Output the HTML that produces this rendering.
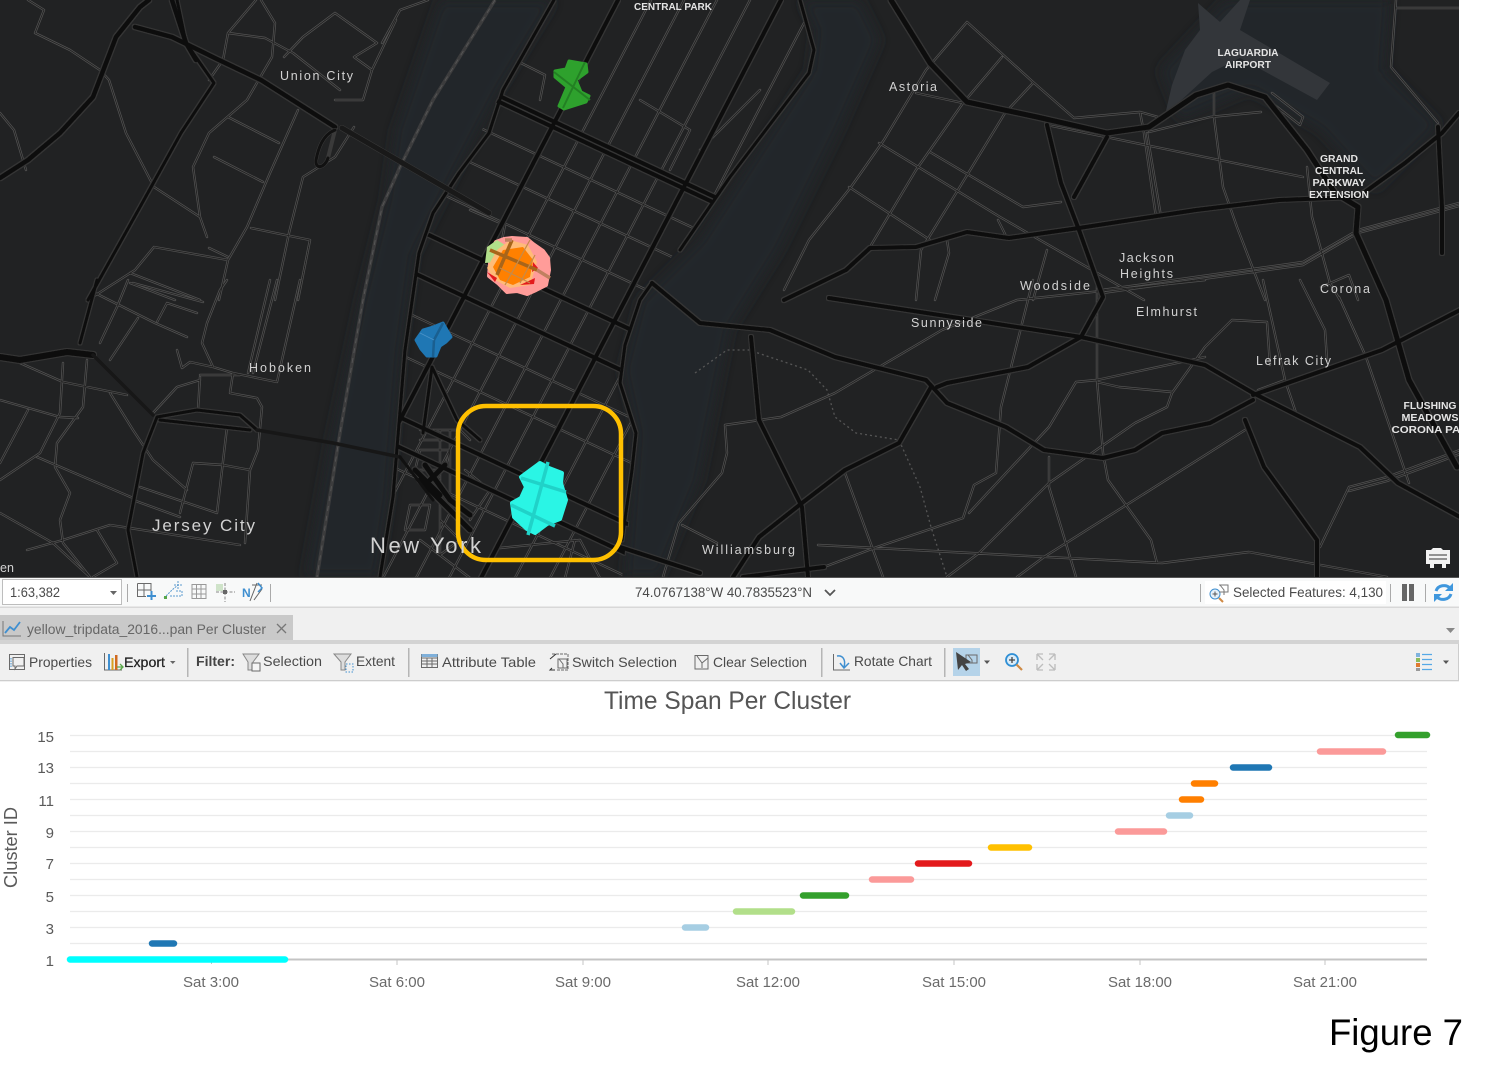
<!DOCTYPE html>
<html><head><meta charset="utf-8"><title>Figure 7</title>
<style>
html,body{margin:0;padding:0;background:#fff;width:1503px;height:1082px;overflow:hidden}
svg{display:block}
text{font-family:"Liberation Sans",sans-serif}
.m{fill:#d2d2d2}
.c{fill:#e4e4e4;font-weight:bold;text-anchor:middle;font-size:10.5px}
.t{fill:#4a4a4a;font-size:14px}
.y{fill:#5a5a5a;font-size:15px;text-anchor:end}
.x{fill:#6a6a6a;font-size:15px;text-anchor:middle}
.ic{fill:none;stroke:#6a6a6a;stroke-width:1}
</style></head><body>
<svg width="1503" height="1082" viewBox="0 0 1503 1082" xmlns="http://www.w3.org/2000/svg">
<defs>
<filter id="soft" x="-2%" y="-2%" width="104%" height="104%"><feGaussianBlur stdDeviation=".35"/></filter>
<filter id="dil" x="-2%" y="-2%" width="104%" height="104%"><feMorphology operator="dilate" radius=".8"/><feGaussianBlur stdDeviation=".3"/></filter>
<filter id="wat" x="-5%" y="-5%" width="110%" height="110%"><feGaussianBlur stdDeviation="6"/></filter>
<clipPath id="mapc"><rect x="0" y="0" width="1459" height="577"/></clipPath>
<clipPath id="man"><path d="M554 0L503 90L459 173L419 253L405 350L393 497L380 578H622L634 470L636 433L620 370L640 300L730 177L809 73L814 50L800 0Z"/></clipPath>
<g id="min" fill="none" stroke-linejoin="round" stroke-linecap="round">
<g clip-path="url(#man)">
<path d="M651 0L350 578M684 0L383 578M717 0L416 578M750 0L449 578M816 0L515 578M851 0L550 578"/>
<path d="M380 81L830 292M380 120L830 331M380 165L830 376M380 300L830 511M380 345L830 556M380 461L830 672"/>
<path d="M515 60L545 75L540 100M640 100L690 130L670 170M700 150L760 90M470 210L505 225L500 250M420 430H460L470 440M420 440H455M440 430V520M450 430V510M465 470L490 490L470 520M420 540L470 578M500 548L580 540L600 578M575 540L565 578M410 505H430L425 530H405ZM440 520L460 540L440 555ZM420 450H450L445 470H415Z"/>
</g>
<path d="M28 0L44 10L35 33L70 50L100 70L109 80L126 133L154 187L200 217L207 237M0 113L14 130L26 170M256 0L228 33L223 60L209 80M228 33L265 38L293 53L340 90M261 0L275 23L272 57L247 100L209 133L193 167L200 217M335 13L377 43L354 57L372 70M303 37L284 57M335 13L303 37M428 0L400 10L382 43M396 20L372 70L363 100L335 100M228 117L279 143M214 157L263 182M298 110L270 173L247 227L228 260L219 300M354 127L335 157L303 177L289 233L275 300M251 228L310 240L298 300M228 260L154 247L135 270L88 300M130 273L200 300M130 283L175 300M209 248L228 257"/>
<path d="M128 280L117 307L100 343M95 293L155 323M133 283L203 302M155 323L187 337M157 322L167 303L197 313M138 318L110 360M227 280L220 290L207 323L202 343L213 367M177 350L182 368L190 362L213 367L233 373L277 382L300 280M277 280L253 373M270 280L248 373M233 373L230 393L257 398L262 407L258 450L250 470L245 543M227 427L217 513M193 463L223 465L250 470M193 463L180 513M140 487L217 513M133 500L180 517M0 400L60 417L78 418M20 363L63 382L127 395M63 363L60 413L40 453L0 480M87 360L83 407L57 443L55 467L70 493L60 520L63 543L90 577M28 410L0 463M37 457L133 498M0 513L53 543L90 577M110 393L133 430L153 460L187 490M200 380L177 387L153 413M200 377L198 410M63 540L110 525L240 545M27 550L63 540M97 530L117 563L93 577M200 375H240"/>
<path d="M967 22L926 70L884 140L851 187L809 240L784 290M967 22L1033 82L1074 118M1002 57L963 103L916 170L870 247M1033 83L1005 113L958 190L921 250L916 300M879 143L1000 217L1144 300M930 152L1023 207L1061 202M849 187L930 240M998 220L1007 238M916 93L963 103M1047 125L1303 177M1074 118L1140 112L1158 117M1140 112L1144 133L1156 217M1147 133L1161 217M1149 132L1210 117L1261 112M1214 93L1214 117L1223 187L1237 227L1265 300M1272 93L1303 117L1300 125L1272 103M1396 0L1391 67L1438 123M1396 8H1459M1307 167L1312 217L1330 283L1340 300M1102 290L1303 262L1358 230L1459 203M1102 293L1303 265L1358 233L1459 206M1321 287L1349 275L1358 300M1047 250L1033 300M947 240L949 253L935 300"/>
<path d="M781 417L725 425L727 453L722 473L679 523L663 577M781 417L835 393L942 330L1017 300L1205 280M1033 280L1001 407L996 473L974 485L963 518M963 518L877 547L824 567M1205 357L1097 380L1076 382L1049 427L969 513M1097 280L1097 380L1103 453L1108 480L1151 540L1157 563M1232 320L1205 347L1172 393L1167 407L1135 423L1049 483L979 553L947 577M1097 382L1119 387L1172 392M1245 430L1044 557L1017 577M818 545L1162 563L1249 552L1387 577M845 473L872 547L883 577M1049 457L1049 487L1076 577M1258 390L1285 380L1296 413M1263 280L1285 380M1339 297L1366 357L1409 483M1349 487L1387 477L1460 450M1349 491L1387 481L1460 454M1320 547L1349 487M682 525L717 543M1232 320L1267 322L1270 365M1300 280L1325 330L1327 360"/>
</g>
<g id="maj" fill="none" stroke-linejoin="round" stroke-linecap="round">
<path stroke-width="4.500" d="M0 178L28 160L60 133L93 97L116 37L140 7L149 0M135 27L172 37L219 60L261 80L335 127M172 0L186 43L196 60"/>
<path stroke-width="3" d="M177 0L186 43L214 83L181 133L140 207L88 300M97 280L80 343M137 577L128 530L143 453L157 417L197 410L240 415L257 430M160 420L250 430M554 0L503 90L489 133L459 173L433 213L419 253L405 350L393 497L380 577M800 0L814 50L809 73L730 177L680 250M652 283L640 300L625 345L620 383L636 433L632 470L622 540M432 367L423 433M432 367L457 420L480 440"/>
<path stroke-width="6" d="M0 357L20 360L67 352L93 355"/>
<path clip-path="url(#man)" stroke-width="4" d="M380 40L830 251M380 212L830 423M380 257L830 468M380 408L830 619M380 438L830 649M618 0L318 578M781 0L481 578M380 46L830 257"/>
<path stroke-width="5" d="M891 0L930 63L967 102L1037 117L1107 133L1149 127L1196 95L1228 85L1265 97L1307 150L1335 193L1358 207L1356 233L1386 300L1409 380L1457 467"/>
<path stroke-width="4" d="M1047 125L1061 183L1079 230L1098 283L1103 297L1081 337L1028 367L947 383L937 387M1107 137L1074 197M846 270L870 248L916 247L967 232L1009 238L1079 228L1196 210L1279 200L1358 197L1405 163L1442 133L1459 113M1438 127L1442 207L1442 253M829 298L985 322L1081 337L1205 365L1253 393M1253 395L1382 350L1460 310M1253 393L1360 447L1398 483L1460 517M652 283L700 323L770 330L835 357L926 380L947 403L1006 427L1044 450L1103 458L1135 450L1162 433L1210 423L1253 400M931 387L899 443L845 470L802 503L759 537L733 577M751 337L759 420L802 507L808 577M1245 420L1264 467L1317 540L1317 577M620 547L700 573M743 577L824 567M846 270L784 300"/>
<path clip-path="url(#man)" stroke-width="5" d="M415 470L440 495M425 465L450 500L470 515M430 480L445 465M420 480L470 530"/>
</g>
</defs>

<!-- MAP -->
<g clip-path="url(#mapc)">
<rect width="1459" height="577" fill="#212223"/>
<g filter="url(#wat)" fill="#24272a">
<path d="M440 0H555L500 90L455 175L415 255L402 350L390 497L378 577H305L330 440L360 300L385 200L395 130Z"/>
<path d="M640 300L700 240L810 70L815 30L800 0H860L880 40L840 130L780 250L730 330L700 480L660 577H625L636 433L622 370Z"/>
<path d="M1225 0H1390L1385 70L1440 125L1375 190L1320 130L1250 90L1180 120L1160 70Z"/>
</g>
<path fill="#33363a" d="M1198 3L1220 22L1240 0H1250L1240 30L1330 83L1317 100L1240 58L1212 72L1165 115L1172 85L1185 50L1200 30Z"/>
<path fill="none" stroke="#3c3c3d" stroke-width="3.500" d="M495 0L433 100L400 167L382 207L363 300L340 433L317 577"/>
<path fill="none" stroke="#555" stroke-width="1" stroke-dasharray="5 5" d="M495 0L433 100L400 167L382 207L363 300L340 433L317 577"/>
<path fill="none" stroke="#565656" stroke-width="1.300" stroke-dasharray="2 3" d="M695 373L727 350L749 350L808 370L827 390L835 417L856 433L899 440L920 487L931 527L947 577"/>

<g filter="url(#soft)">
<use href="#min" stroke="#525252" stroke-width="2.400"/>
<use href="#min" stroke="#202020" stroke-width=".9"/>
</g>
<use href="#maj" stroke="#343434" filter="url(#dil)"/>
<use href="#maj" stroke="#0f0f0f" filter="url(#soft)"/>

<!-- tunnels -->
<g fill="none" stroke-linecap="round" stroke-linejoin="round">
<path stroke="#3a3a3a" stroke-width="6" d="M342 128L489 213"/><path stroke="#191919" stroke-width="5" d="M342 128L489 213"/>
<path stroke="#3a3a3a" stroke-width="4" d="M335 130C322 135 318 150 316 160C315 170 325 168 328 158L335 130"/>
<path stroke="#111" stroke-width="3" d="M335 130C322 135 318 150 316 160C315 170 325 168 328 158"/>
<path stroke="#171717" stroke-width="3.500" d="M93 355L153 415M257 430L333 443L400 457"/>
<path stroke="#111" stroke-width="3" d="M400 457L433 500"/>
</g>

<!-- clusters -->
<path fill="#2ea12d" stroke="#2ea12d" stroke-width="3" stroke-linejoin="round" d="M555 71L566 69L569 61L586 64L587 72L576 80L581 92L589 96L586 102L564 109L559 106L567 87L555 77Z"/>
<path fill="none" stroke="#238023" stroke-width="2" d="M554 72L590 100M585 62L563 108"/>
<path fill="#ff9c99" stroke="#ff9c99" stroke-width="4" stroke-linejoin="round" d="M491 251L496 242L504 239L512 238L527 239L533 244L543 251L548 258L549 270L546 285L536 290L527 294L517 291L507 292L498 283L489 276Z"/>
<path fill="#b2df8a" d="M485 263L487 247L497 240L505 245L498 262Z"/>
<path fill="#ffbb78" d="M487 268L497 250L510 240L528 245L537 262L530 285L510 288L495 280Z"/>
<path fill="#e31a1c" d="M487 272L497 278L495 282ZM520 285L535 278L534 284ZM533 262L538 268L532 272Z"/>
<path fill="#ff8000" d="M493 267L503 250L523 247L533 260L530 277L513 285L500 280Z"/>
<g fill="none" stroke-width="3.500"><path stroke="#a8651a" d="M490 250L537 270M512 240L497 275"/><path stroke="#c08060" d="M537 270L550 278M512 240L505 240" /></g>
<path fill="none" stroke="#c58a4a" stroke-width="1.200" d="M505 285L530 240M520 283L535 255M500 268L530 283"/>
<path fill="#1f77b4" stroke="#1f77b4" stroke-width="3" stroke-linejoin="round" d="M416 340L423 330L433 327L443 323L451 337L446 342L440 346L436 356L427 356L421 349Z"/>
<path fill="none" stroke="#1a5f90" stroke-width="2.500" d="M443 323L434 340L433 357"/>
<path fill="none" stroke="#4a93c8" stroke-width=".8" d="M420 333L434 340"/>
<path fill="#2af5e5" stroke="#2af5e5" stroke-width="4" stroke-linejoin="round" d="M521 477L540 463L549 468L562 473L561 483L566 500L560 519L547 524L535 533L527 529L514 517L512 503L521 498L526 487Z"/>
<path fill="none" stroke="#20d2c8" stroke-width="3.500" d="M521 478L566 492M511 505L555 526M548 462L528 535"/>

<!-- yellow box -->
<rect x="458" y="406" width="163" height="154" rx="28" fill="none" stroke="#ffc000" stroke-width="4.500"/>

<!-- labels -->
<text class="c" x="673" y="10" textLength="78" lengthAdjust="spacingAndGlyphs">CENTRAL PARK</text>
<text class="c" x="1248" y="56" textLength="61" lengthAdjust="spacingAndGlyphs">LAGUARDIA</text>
<text class="c" x="1248" y="68" textLength="46" lengthAdjust="spacingAndGlyphs">AIRPORT</text>
<text class="c" x="1339" y="162" textLength="38" lengthAdjust="spacingAndGlyphs">GRAND</text>
<text class="c" x="1339" y="174" textLength="48" lengthAdjust="spacingAndGlyphs">CENTRAL</text>
<text class="c" x="1339" y="186" textLength="53" lengthAdjust="spacingAndGlyphs">PARKWAY</text>
<text class="c" x="1339" y="198" textLength="60" lengthAdjust="spacingAndGlyphs">EXTENSION</text>
<text class="c" x="1430" y="409" textLength="53" lengthAdjust="spacingAndGlyphs">FLUSHING</text>
<text class="c" x="1430" y="421" textLength="57" lengthAdjust="spacingAndGlyphs">MEADOWS</text>
<text class="c" x="1430" y="433" textLength="77" lengthAdjust="spacingAndGlyphs">CORONA PAR</text>
<text class="m" font-size="12.500" x="280" y="80" textLength="73" lengthAdjust="spacing">Union City</text>
<text class="m" font-size="12.500" x="889" y="91" textLength="48" lengthAdjust="spacing">Astoria</text>
<text class="m" font-size="12.500" x="1119" y="262" textLength="55" lengthAdjust="spacing">Jackson</text>
<text class="m" font-size="12.500" x="1120" y="278" textLength="53" lengthAdjust="spacing">Heights</text>
<text class="m" font-size="12.500" x="1020" y="290" textLength="70" lengthAdjust="spacing">Woodside</text>
<text class="m" font-size="12.500" x="1320" y="293" textLength="50" lengthAdjust="spacing">Corona</text>
<text class="m" font-size="12.500" x="1136" y="316" textLength="61" lengthAdjust="spacing">Elmhurst</text>
<text class="m" font-size="12.500" x="911" y="327" textLength="71" lengthAdjust="spacing">Sunnyside</text>
<text class="m" font-size="12.500" x="1256" y="365" textLength="75" lengthAdjust="spacing">Lefrak City</text>
<text class="m" font-size="12.500" x="249" y="372" textLength="62" lengthAdjust="spacing">Hoboken</text>
<text class="m" font-size="12.500" x="702" y="554" textLength="93" lengthAdjust="spacing">Williamsburg</text>
<text class="m" font-size="12.500" x="0" y="572" textLength="14" lengthAdjust="spacing">en</text>
<text class="m" font-size="17" x="152" y="531" textLength="103" lengthAdjust="spacing">Jersey City</text>
<text class="m" font-size="22" x="370" y="553" textLength="111" lengthAdjust="spacing">New York</text>

<!-- map corner icon -->
<path fill="#f2f2f2" d="M1426 550H1431L1433 548H1441L1443 550H1450V564H1446V568H1442V564H1434V568H1430V564H1426Z"/>
<path stroke="#333" stroke-width="1" d="M1429 555H1447M1429 559H1447"/>
</g>

<!-- STATUS BAR -->
<rect y="577" width="1459" height="1" fill="#555"/>
<rect y="578" width="1459" height="29" fill="#f8f9f9"/>
<rect y="606.500" width="1459" height="1.500" fill="#d8d8d8"/>
<rect x="2.500" y="579.500" width="119" height="25" fill="#fff" stroke="#bdbdbd"/>
<text class="t" x="10" y="597" textLength="50" lengthAdjust="spacingAndGlyphs">1:63,382</text>
<path d="M110 591H117L113.500 595Z" fill="#666"/>
<g fill="#aaa"><rect x="127" y="584" width="1" height="18"/><rect x="270" y="584" width="1" height="18"/><rect x="1200" y="584" width="1" height="18"/><rect x="1390" y="584" width="1" height="18"/><rect x="1425" y="584" width="1" height="18"/></g>
<g class="ic">
<path d="M137.500 583.500H151V592M137.500 583.500V596.500H146M137.500 590H151M144 583.500V596.500"/>
<path d="M147 596H156M151.500 591V600" stroke="#3f8fd0" stroke-width="2"/>
<path d="M164 598L172 590L178 585M170 596H182V591H176M174 585H182M178 581V589" stroke="#5b9bd0" stroke-dasharray="2 1"/>
<rect x="164" y="596" width="3" height="3" fill="#57a64a" stroke="none"/>
<path d="M192 584.500H206V598.500H192ZM192 589H206M192 594H206M196.500 585V598M201 585V598" stroke="#999"/>
<rect x="216" y="584" width="7" height="7" fill="#cfe3c9" stroke="none"/>
<path d="M216 592H235M225 583V602" stroke="#888" stroke-dasharray="3 1.500"/>
<rect x="223" y="590" width="4" height="4" fill="#666" stroke="none"/>
<path d="M257 583L250 601M252 585H262M254 600L262 589" stroke="#666"/>
<path d="M258 583L262 588L258 592" stroke="#3f8fd0" stroke-width="1.500"/>
</g>
<text x="242" y="597" font-size="12" font-weight="bold" fill="#3f8fd0">N</text>
<text class="t" x="635" y="597" textLength="177" lengthAdjust="spacingAndGlyphs">74.0767138°W 40.7835523°N</text>
<path d="M825 590L830 595L835 590" fill="none" stroke="#555" stroke-width="1.800"/>
<rect x="1205" y="581" width="181" height="23" fill="#fff"/>
<circle cx="1215" cy="594" r="5" fill="#e6f1fa" stroke="#3f8fd0"/>
<path d="M1212.500 594H1217.500M1215 591.500V596.500" stroke="#555"/>
<path d="M1219 598L1223 602" stroke="#d08a45" stroke-width="2"/>
<path d="M1219 585H1228V592H1219M1220 585L1224 590V595" fill="none" stroke="#777"/>
<text class="t" x="1233" y="597" textLength="150" lengthAdjust="spacingAndGlyphs">Selected Features: 4,130</text>
<rect x="1402" y="584" width="5" height="17" fill="#666"/><rect x="1409" y="584" width="5" height="17" fill="#666"/>
<path d="M1436 591C1438 585 1446 584 1450 588M1451 594C1449 600 1441 601 1437 597" fill="none" stroke="#3f97dd" stroke-width="3"/>
<path d="M1453 583V591H1445ZM1434 602V594H1442Z" fill="#3f97dd"/>

<!-- TAB ROW -->
<rect y="608" width="1459" height="32" fill="#f0f0f0"/>
<rect y="615" width="293" height="25" fill="#c9c9c9"/>
<path d="M3 621V636H21" fill="none" stroke="#777"/>
<path d="M5 633L10 627L14 630L20 622" fill="none" stroke="#3f8fd0" stroke-width="1.800"/>
<text x="27" y="634" font-size="14" fill="#666" textLength="239" lengthAdjust="spacingAndGlyphs">yellow_tripdata_2016...pan Per Cluster</text>
<path d="M277 624L286 633M286 624L277 633" stroke="#777" stroke-width="1.300"/>
<path d="M1446 628H1455L1450.500 633Z" fill="#888"/>
<rect y="640" width="1459" height="4" fill="#d3d3d3"/>

<!-- TOOLBAR -->
<rect y="644" width="1459" height="37" fill="#f0f0f0"/>
<rect y="680" width="1459" height="1.300" fill="#cdcdcd"/>
<rect x="1458" y="644" width="1" height="37" fill="#cdcdcd"/>
<g fill="#b5b5b5"><rect x="187" y="648" width="1.500" height="29"/><rect x="408" y="648" width="1.500" height="29"/><rect x="821" y="648" width="1.500" height="29"/><rect x="944" y="648" width="1.500" height="29"/></g>
<rect x="953" y="648" width="27" height="28" fill="#b5d3e9"/>
<g class="ic">
<rect x="9.500" y="654.500" width="15" height="15" /><path d="M13 657.500H24V666H17L15 669V666H13Z" fill="#f0f0f0"/><path d="M11 658V668" stroke="#3f8fd0" stroke-dasharray="1.500 1"/>
<path d="M104.500 653V670H122"/>
<path d="M243 654H259L253 662V670H248V662Z" stroke="#888" fill="#ddd"/>
<rect x="252" y="663" width="8" height="8" fill="#f5f5f5"/>
<path d="M334 654H351L345 662V670H341V662Z" stroke="#888" fill="#ddd"/>
<path d="M346 664H353V672H346Z" stroke="#3f8fd0" stroke-dasharray="1.500 1.500"/>
<rect x="421.500" y="654.500" width="16" height="13"/><path d="M421.500 658H437.500M421.500 661H437.500M421.500 664H437.500M427 658V667M432 658V667"/>
<rect x="421.500" y="654" width="16" height="3" fill="#7fb0da" stroke="none"/>
<path d="M552 654H568V670H556" stroke-dasharray="3 1"/><path d="M558 659H567V668H558ZM559 659L563 664V668"/>
<path d="M550 659L556 654M552 668L550 670L555 670" stroke="#333"/>
<path d="M695 655.500H708V669H695ZM697 656L702 663V668M708 658L702 663"/>
<path d="M833.500 654V670H850"/>
<path d="M837 656C843 655 846 660 844 667" stroke="#3f8fd0" stroke-width="1.500"/><path d="M840 663L844 668L849 663" stroke="#3f8fd0" stroke-width="1.500"/>
<path d="M966 655H977V663H966ZM968 655L972 660V663"/>
<path d="M1037 654H1043M1037 654V660M1055 654H1049M1055 654V660M1037 670H1043M1037 670V664M1055 670H1049M1055 670V664M1037 654L1043 660M1055 654L1049 660M1037 670L1043 664M1055 670L1049 664" stroke="#bdbdbd" stroke-width="1.300"/>
</g>
<g fill="#e0a030"><rect x="108" y="654" width="2" height="16" fill="#3f8fd0"/><rect x="111.500" y="658" width="2" height="12" fill="#d9a020"/><rect x="115" y="655" width="2.500" height="15" fill="#d06a20"/></g>
<path d="M117 667H122M120 664L123 667L120 670" stroke="#5aa84a" stroke-width="1.300" fill="none"/>
<path d="M170 661H175.500L172.800 664Z" fill="#666"/>
<path d="M956 652L958 670L962 665L966 671L969 669L965 664L971 662Z" fill="#444"/>
<path d="M984 660.500H990L987 664Z" fill="#555"/>
<circle cx="1012" cy="660" r="6" fill="#d9ecf9" stroke="#2f8fd5" stroke-width="1.800"/>
<path d="M1009 660H1015M1012 657V663" stroke="#444" stroke-width="1.300"/>
<path d="M1016.500 664.500L1022 670" stroke="#cf8a45" stroke-width="2.200"/>
<g fill="#7fb3de"><rect x="1416" y="653" width="4" height="4"/></g><rect x="1416" y="658" width="4" height="4" fill="#8dbb5b"/><rect x="1416" y="663" width="4" height="4" fill="#e07a30"/><rect x="1416" y="668" width="4" height="3" fill="#999"/>
<path d="M1422 654.500H1432M1422 659.500H1432M1422 664.500H1432M1422 669.500H1432" stroke="#55a8e6" stroke-width="1.200"/>
<path d="M1443 660.500H1449L1446 664Z" fill="#555"/>

<text class="t" x="29" y="667" textLength="63" lengthAdjust="spacingAndGlyphs">Properties</text>
<text x="124" y="667" font-size="14" fill="#222" textLength="41" lengthAdjust="spacingAndGlyphs" stroke="#222" stroke-width=".25">Export</text>
<text x="196" y="666" font-size="14" font-weight="bold" fill="#444" textLength="39" lengthAdjust="spacingAndGlyphs">Filter:</text>
<text class="t" x="263" y="666" textLength="59" lengthAdjust="spacingAndGlyphs">Selection</text>
<text class="t" x="356" y="666" textLength="39" lengthAdjust="spacingAndGlyphs">Extent</text>
<text class="t" x="442" y="667" textLength="94" lengthAdjust="spacingAndGlyphs">Attribute Table</text>
<text class="t" x="572" y="667" textLength="105" lengthAdjust="spacingAndGlyphs">Switch Selection</text>
<text class="t" x="713" y="667" textLength="94" lengthAdjust="spacingAndGlyphs">Clear Selection</text>
<text class="t" x="854" y="666" textLength="78" lengthAdjust="spacingAndGlyphs">Rotate Chart</text>

<!-- CHART -->
<text x="604" y="709" font-size="25" fill="#555" textLength="247" lengthAdjust="spacingAndGlyphs">Time Span Per Cluster</text>
<path stroke="#ebebeb" stroke-width="1.300" d="M70 735.500H1427M70 751.500H1427M70 767.500H1427M70 783.500H1427M70 799.500H1427M70 815.500H1427M70 831.500H1427M70 847.500H1427M70 863.500H1427M70 879.500H1427M70 895.500H1427M70 911.500H1427M70 927.500H1427M70 943.500H1427"/>
<rect x="70" y="958.500" width="1357" height="2" fill="#c4c4c4"/>
<path stroke="#c4c4c4" d="M397 960V965M583 960V965M768 960V965M954 960V965M1140 960V965M1325 960V965M211.500 960V964"/>
<g fill="none" stroke-width="6.500" stroke-linecap="round">
<path stroke="#00ffff" d="M70 959.500H285"/>
<path stroke="#1f77b4" d="M152 943.500H174"/>
<path stroke="#a6cee3" d="M685 927.500H706"/>
<path stroke="#b2df8a" d="M736 911.500H792"/>
<path stroke="#33a02c" d="M803 895.500H846"/>
<path stroke="#fb9a99" d="M872 879.500H911"/>
<path stroke="#e31a1c" d="M918 863.500H969"/>
<path stroke="#ffc000" d="M991 847.500H1029"/>
<path stroke="#fb9a99" d="M1118 831.500H1164"/>
<path stroke="#a6cee3" d="M1169 815.500H1190"/>
<path stroke="#ff7f00" d="M1182 799.500H1201"/>
<path stroke="#ff7f00" d="M1194 783.500H1215"/>
<path stroke="#1f77b4" d="M1233 767.500H1269"/>
<path stroke="#fb9a99" d="M1320 751.500H1383"/>
<path stroke="#33a02c" d="M1398 735H1427"/>
</g>
<text class="y" x="54" y="742">15</text><text class="y" x="54" y="773">13</text><text class="y" x="54" y="806">11</text><text class="y" x="54" y="838">9</text><text class="y" x="54" y="869">7</text><text class="y" x="54" y="902">5</text><text class="y" x="54" y="934">3</text><text class="y" x="54" y="966">1</text>
<text x="17" y="888" transform="rotate(-90 17 888)" font-size="18" fill="#5a5a5a" textLength="81" lengthAdjust="spacingAndGlyphs">Cluster ID</text>
<text class="x" x="211" y="987" textLength="56" lengthAdjust="spacingAndGlyphs">Sat 3:00</text>
<text class="x" x="397" y="987" textLength="56" lengthAdjust="spacingAndGlyphs">Sat 6:00</text>
<text class="x" x="583" y="987" textLength="56" lengthAdjust="spacingAndGlyphs">Sat 9:00</text>
<text class="x" x="768" y="987" textLength="64" lengthAdjust="spacingAndGlyphs">Sat 12:00</text>
<text class="x" x="954" y="987" textLength="64" lengthAdjust="spacingAndGlyphs">Sat 15:00</text>
<text class="x" x="1140" y="987" textLength="64" lengthAdjust="spacingAndGlyphs">Sat 18:00</text>
<text class="x" x="1325" y="987" textLength="64" lengthAdjust="spacingAndGlyphs">Sat 21:00</text>
<text x="1329" y="1045" font-size="37" fill="#000" textLength="134" lengthAdjust="spacingAndGlyphs">Figure 7</text>
</svg>
</body></html>
